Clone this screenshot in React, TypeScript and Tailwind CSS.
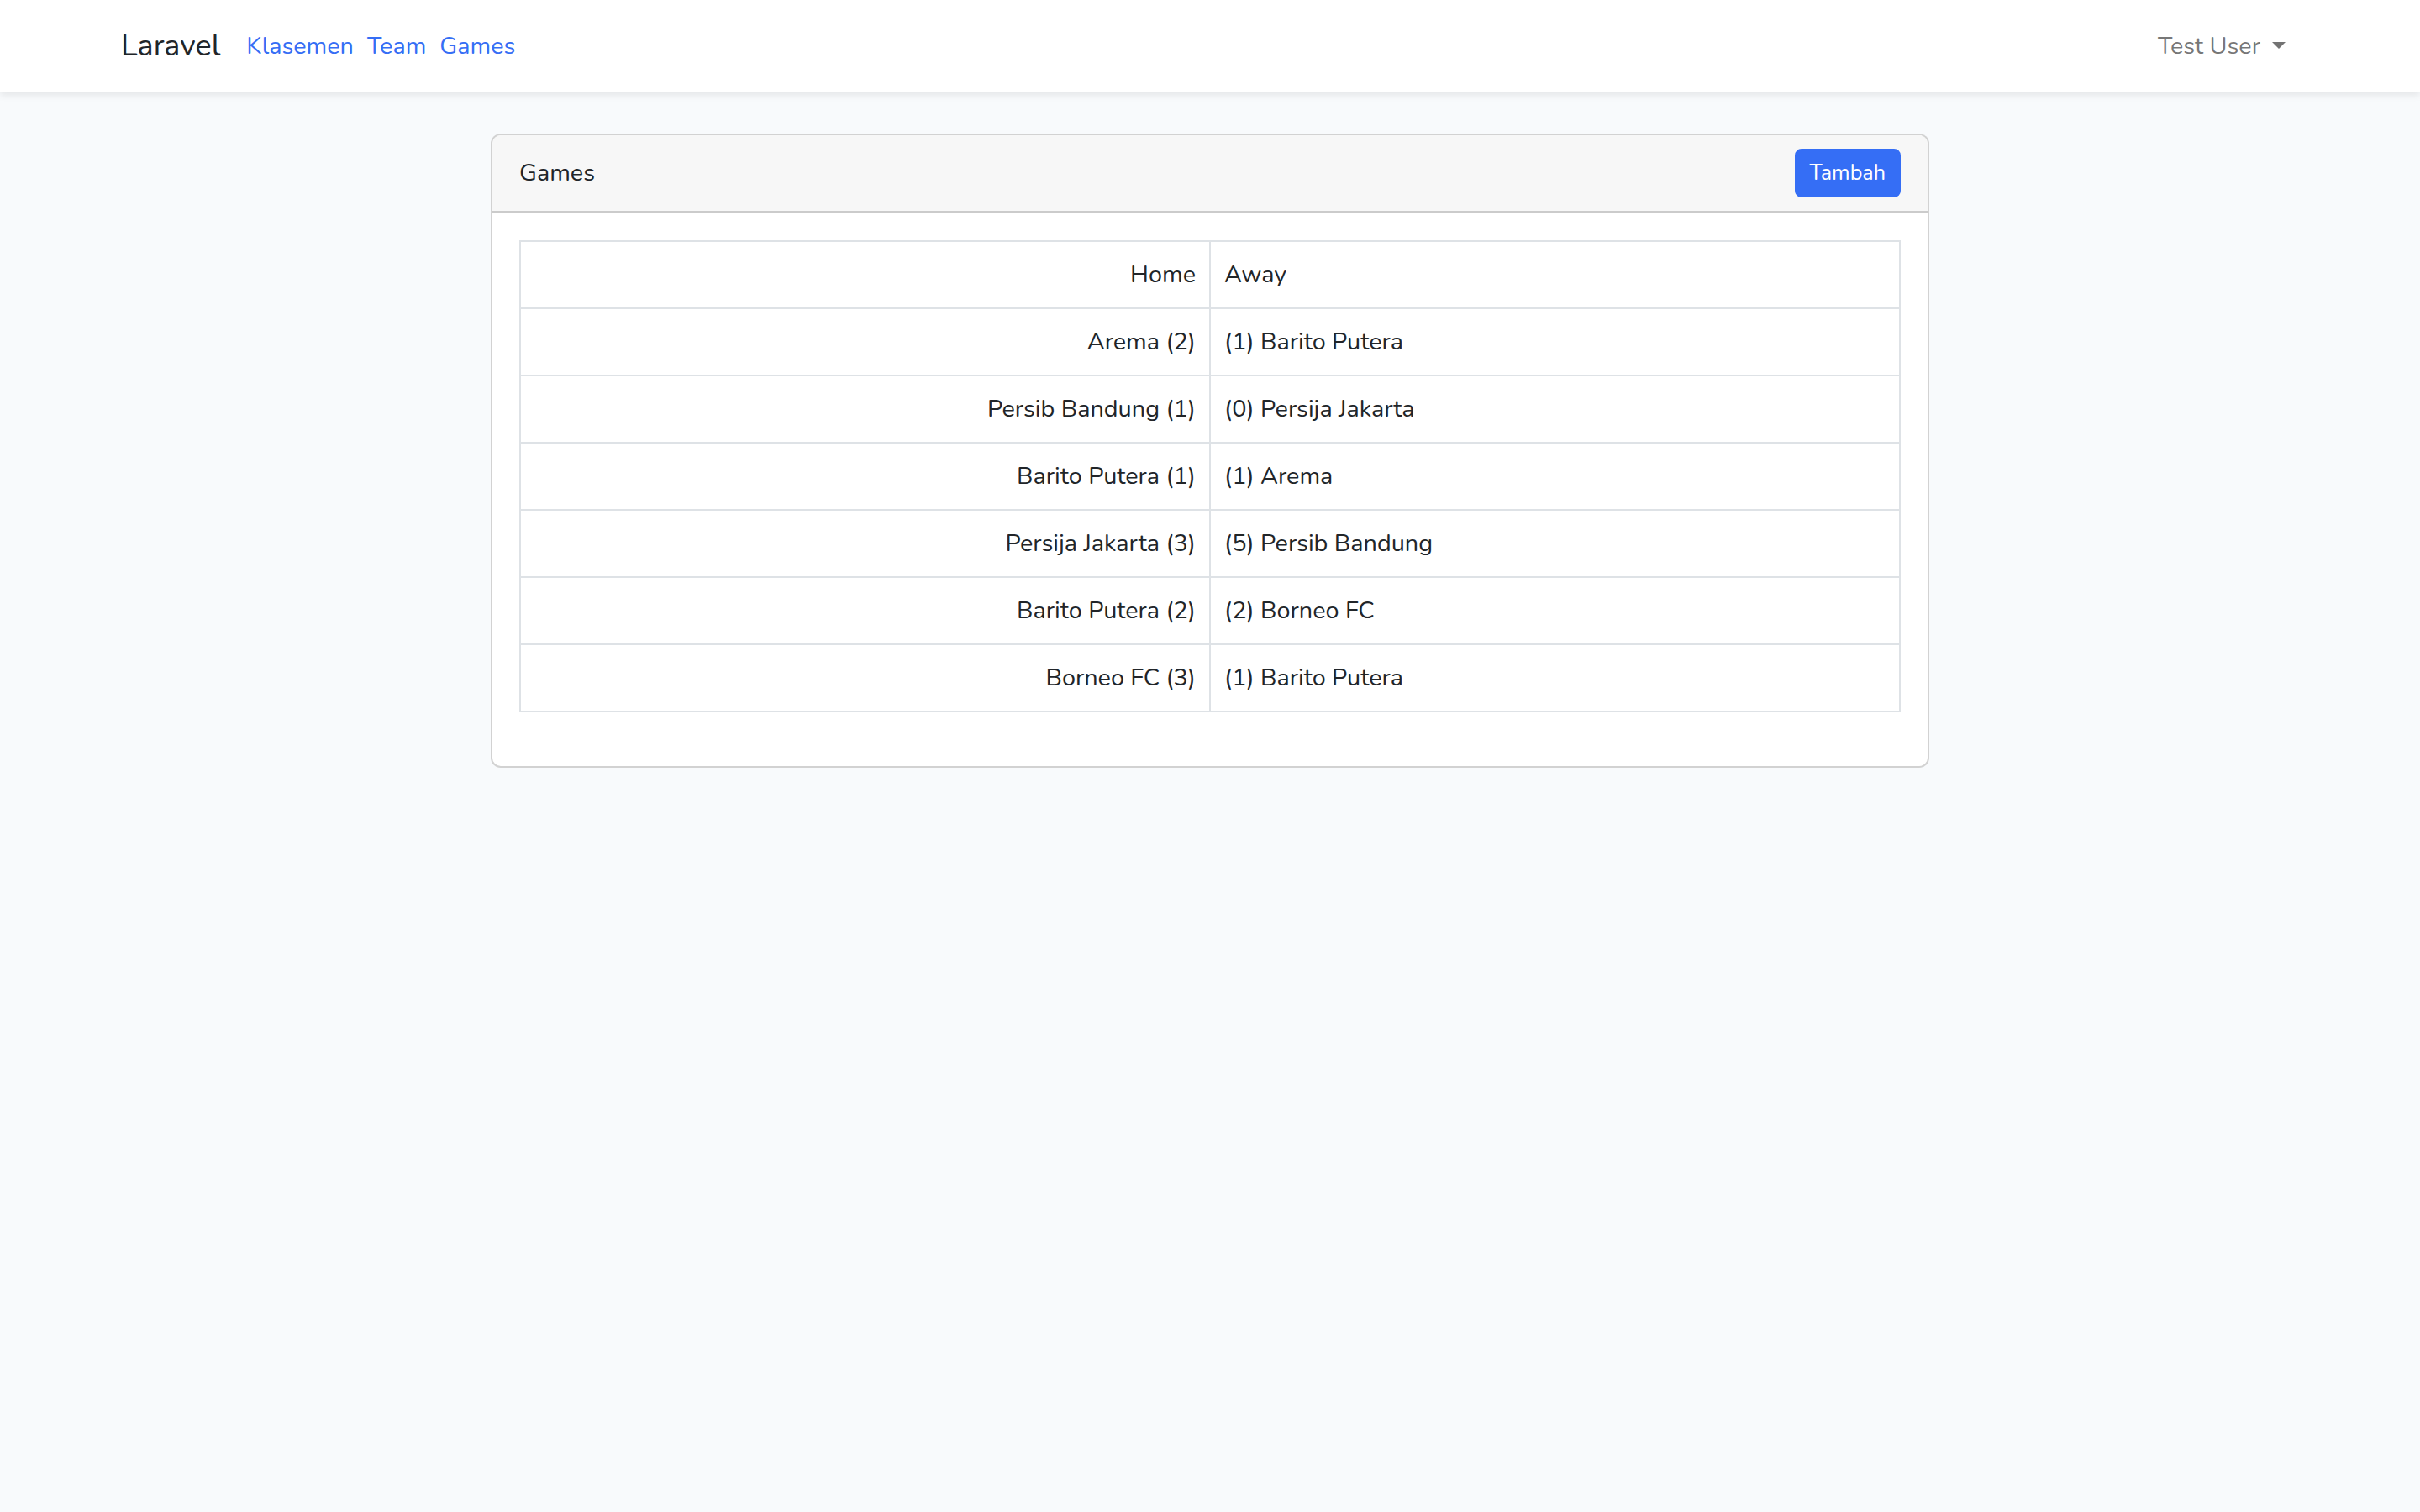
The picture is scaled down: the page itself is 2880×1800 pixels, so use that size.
import React from 'react'

const games = [
  { home: 'Arema', homeScore: 2, away: 'Barito Putera', awayScore: 1 },
  { home: 'Persib Bandung', homeScore: 1, away: 'Persija Jakarta', awayScore: 0 },
  { home: 'Barito Putera', homeScore: 1, away: 'Arema', awayScore: 1 },
  { home: 'Persija Jakarta', homeScore: 3, away: 'Persib Bandung', awayScore: 5 },
  { home: 'Barito Putera', homeScore: 2, away: 'Borneo FC', awayScore: 2 },
  { home: 'Borneo FC', homeScore: 3, away: 'Barito Putera', awayScore: 1 },
]

const Navbar = () => {
  return (
    <nav className="bg-white shadow-[0_4px_8px_rgba(0,0,0,0.075)] py-4">
      <div className="flex items-center justify-between px-[144px]">
        <div className="flex items-center">
          <a className="text-[36px] leading-[58px] text-[#212529] mr-[23px] py-[10px]">Laravel</a>
          <ul className="flex items-center">
            <li><a className="block px-2 py-4 text-[#356ef5]">Klasemen</a></li>
            <li><a className="block px-2 py-4 text-[#356ef5]">Team</a></li>
            <li><a className="block px-2 py-4 text-[#356ef5]">Games</a></li>
          </ul>
        </div>
        <a className="flex items-center px-4 py-4 text-[rgba(0,0,0,0.55)]">
          Test User
          <span className="ml-[14px] inline-block w-0 h-0 border-x-[8.6px] border-x-transparent border-t-[8.6px] border-t-[rgba(0,0,0,0.55)] mb-[2px]" />
        </a>
      </div>
    </nav>
  )
}

const App = () => {
  return (
    <div className="min-h-screen bg-[#f8fafc] text-[28.8px] leading-[46px] text-[#212529] font-['Nunito','Noto_Sans',sans-serif]">
      <Navbar />

      <main className="pt-[49px] pb-12">
        <div className="mx-auto w-[1712px]">
          <div className="bg-white border-2 border-[rgba(0,0,0,0.175)] rounded-[12px] overflow-hidden">
            <div className="flex items-center justify-between bg-[#f7f7f7] border-b-2 border-[rgba(0,0,0,0.175)] px-8 py-4">
              <span>Games</span>
              <button className="bg-[#356ef5] text-white text-[25.2px] leading-[38px] px-4 py-2 rounded-[8px] border-2 border-[#356ef5]">
                Tambah
              </button>
            </div>

            <div className="p-8 pt-[33px]">
              <table className="w-full border-collapse mb-8">
                <tbody>
                  <tr>
                    <td className="w-1/2 border-2 border-[#dee2e6] px-4 py-4 text-right">Home</td>
                    <td className="w-1/2 border-2 border-[#dee2e6] px-4 py-4">Away</td>
                  </tr>
                  {games.map((g, i) => (
                    <tr key={i}>
                      <td className="border-2 border-[#dee2e6] px-4 py-4 text-right">
                        {g.home} ({g.homeScore})
                      </td>
                      <td className="border-2 border-[#dee2e6] px-4 py-4">
                        ({g.awayScore}) {g.away}
                      </td>
                    </tr>
                  ))}
                </tbody>
              </table>
            </div>
          </div>
        </div>
      </main>
    </div>
  )
}

export default App
